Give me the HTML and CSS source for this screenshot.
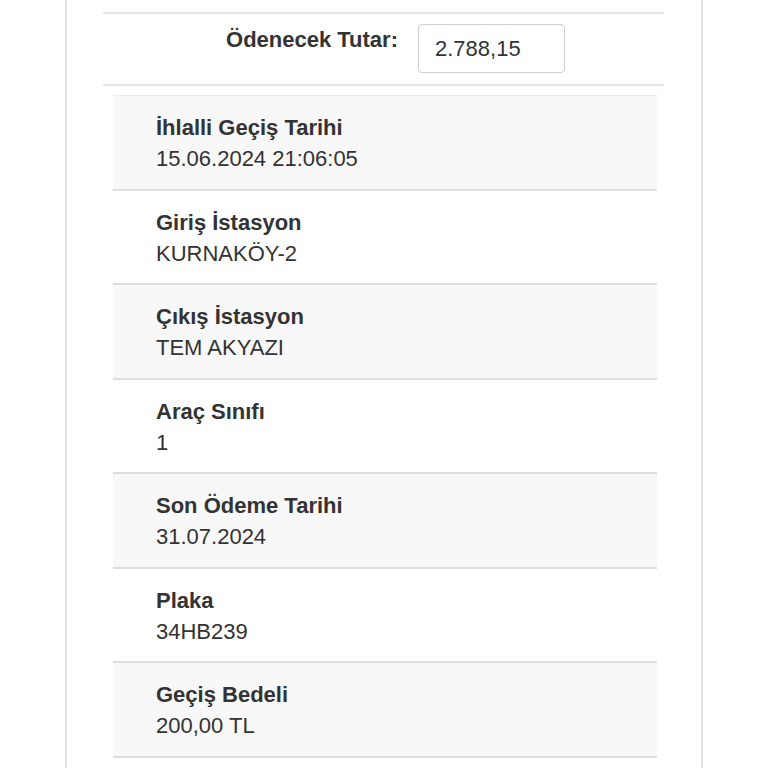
FILE: index.html
```html
<!DOCTYPE html>
<html lang="tr">
<head>
  <meta charset="UTF-8">
  <meta name="viewport" content="width=device-width, initial-scale=1.0">
  <title>İhlalli Geçiş Detayı</title>
  <link rel="stylesheet" href="styles.css">
</head>
<body>

<div class="panel">
  <div class="total">
    <label class="total-label" for="tutar">Ödenecek Tutar:</label>
    <input type="text" id="tutar" class="total-input" value="2.788,15" readonly>
  </div>

  <div class="details">
    <div class="row odd">
      <div class="row-label">İhlalli Geçiş Tarihi</div>
      <div class="row-value">15.06.2024 21:06:05</div>
    </div>
    <div class="row">
      <div class="row-label">Giriş İstasyon</div>
      <div class="row-value">KURNAKÖY-2</div>
    </div>
    <div class="row odd">
      <div class="row-label">Çıkış İstasyon</div>
      <div class="row-value">TEM AKYAZI</div>
    </div>
    <div class="row">
      <div class="row-label">Araç Sınıfı</div>
      <div class="row-value">1</div>
    </div>
    <div class="row odd">
      <div class="row-label">Son Ödeme Tarihi</div>
      <div class="row-value">31.07.2024</div>
    </div>
    <div class="row">
      <div class="row-label">Plaka</div>
      <div class="row-value">34HB239</div>
    </div>
    <div class="row odd">
      <div class="row-label">Geçiş Bedeli</div>
      <div class="row-value">200,00 TL</div>
    </div>
  </div>
</div>

</body>
</html>
```

FILE: styles.css
```css
body {
  margin: 0;
  background: #fff;
  font-family: "Liberation Sans", Arial, sans-serif;
  color: #333;
}
.panel {
  margin-left: 65px;
  width: 638px;
  min-height: 768px;
  box-sizing: border-box;
  border-left: 2px solid #e2e2e2;
  border-right: 2px solid #e2e2e2;
  padding: 12px 37px 0 36px;
}
.total {
  display: flex;
  align-items: flex-start;
  border-top: 2px solid #e4e4e4;
  border-bottom: 2px solid #e4e4e4;
  padding: 10px 0 11px;
}
.total-label {
  width: 315px;
  box-sizing: border-box;
  padding-right: 20px;
  text-align: right;
  font-size: 22px;
  font-weight: bold;
  line-height: 31px;
}
.total-input {
  width: 147px;
  height: 49px;
  box-sizing: border-box;
  border: 1.5px solid #cfcfcf;
  border-radius: 4px;
  padding: 0 16px;
  font-family: "Liberation Sans", Arial, sans-serif;
  font-size: 22px;
  color: #333;
  outline: none;
}
.details {
  margin: 9px 7px 0 10px;
  border-top: 1px solid #ececec;
}
.row {
  padding: 16px 43px 14.5px;
  border-bottom: 2px solid #dedede;
  font-size: 22px;
  line-height: 31px;
}
.row.odd {
  background: #f8f8f8;
}
.row-label {
  font-weight: bold;
}
```
